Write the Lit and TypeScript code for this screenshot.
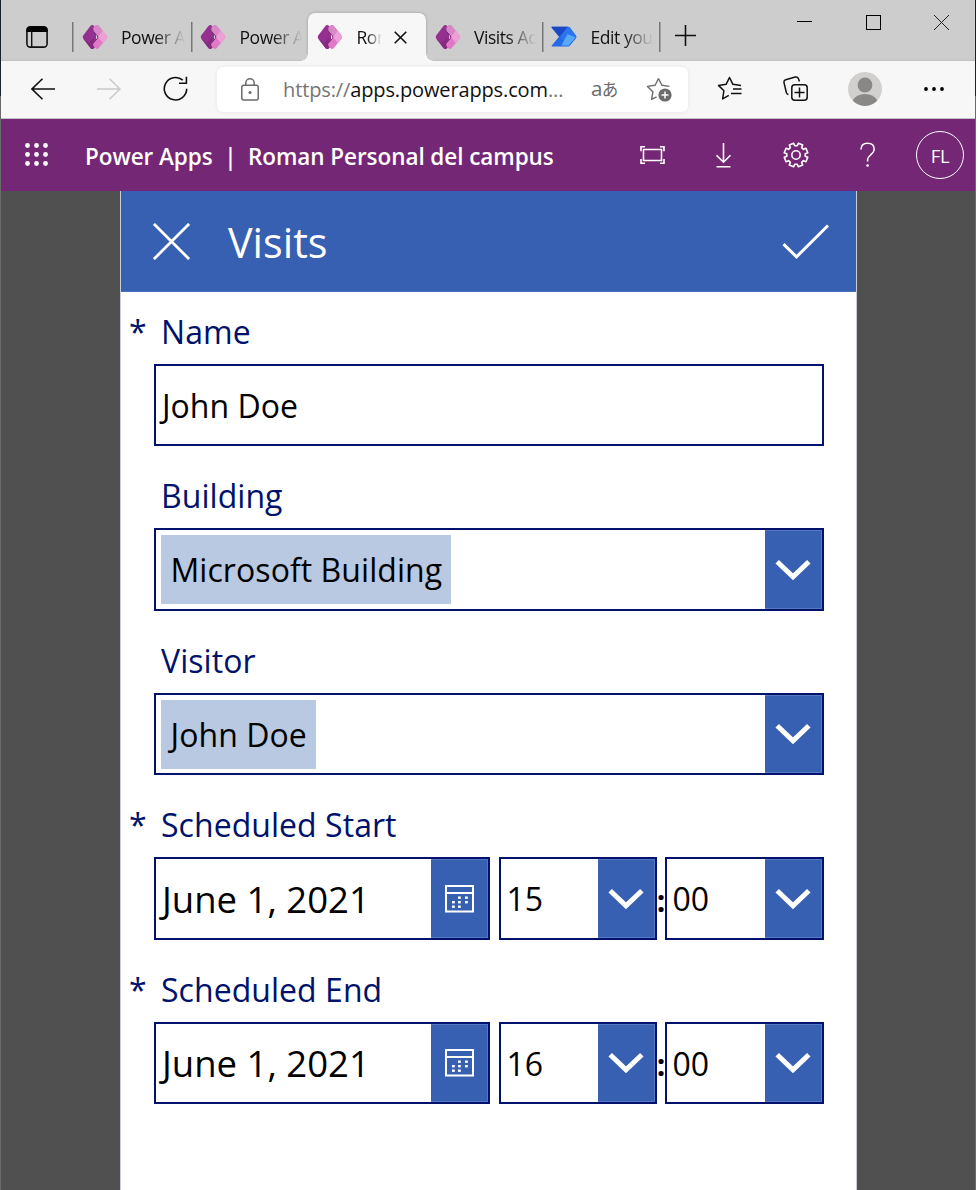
import { LitElement, html, svg, css, nothing } from "lit";
import { customElement, property } from "lit/decorators.js";

const powerAppsLogo = html`<svg width="26" height="26" viewBox="0 0 26 26">
  <path d="M8.600 1.700 Q10 .4 11.600 1.500 L14 4 V22 L11.600 24.500 Q10 25.600 8.600 24.300 L1.200 14.500 Q.2 13 1.200 11.500Z" fill="#94308f"/>
  <path d="M1.200 14.500 L8.600 24.300 Q10 25.600 11.600 24.500 L13 22 L12 13.500 L7 19Z" fill="#852a82"/>
  <path d="M13.400 1.700 Q15 .3 16.600 1.700 L24.700 11.500 Q25.700 13 24.700 14.500 L16.600 24.300 Q15 25.600 13.400 24.300 L11 21.600 Q10.200 20.400 11.200 19.200 L15.300 14.600 Q16.300 13.200 15.300 11.800 L11.400 7.200 Q10.200 5.800 11 4.200Z" fill="#e07ac6"/>
  <path d="M13.400 1.700 Q15 .3 16.600 1.700 L20.600 6.500 L15.800 12.300 L11.400 7.200 Q10.200 5.800 11 4.200Z" fill="#d888c4"/>
  <path d="M20.600 6.500 L24.700 11.500 Q25.700 13 24.700 14.500 L20.900 19 L16 13Z" fill="#eda0d6"/>
  <path d="M11 4.200 Q10.200 5.800 11.400 7.200 L15.300 11.800 Q16.300 13.200 15.300 14.600 L11.200 19.200 Q10.200 20.400 11 21.600" fill="none" stroke="#76206f" stroke-width=".9"/>
</svg>`;

const automateLogo = html`<svg width="26" height="22" viewBox="0 0 26 22">
  <path d="M.5 1.6 Q.3 .8 1.2 .8 H17 Q18.2 .8 19 1.8 L25 9.6 Q25.8 11 25 12.2 L19 19.6 Q18.2 20.6 17 20.6 H1.2 Q.2 20.6 .8 19.6 L8 10.8Z" fill="#2469e8"/>
  <path d="M.5 1.6 Q.3 .8 1.2 .8 H17 L8.4 10.8Z" fill="#1b49c4"/>
  <path d="M17 .8 Q18.2 .8 19 1.8 L25.4 10.8 L17.4 20.6 L9 10.8Z" fill="#2a76ee"/>
  <path d="M16.6 8 L24.4 11.400 L17.6 19.400 L10.4 19.400Z" fill="#5aa8fb"/>
</svg>`;

const chevron = html`<svg width="36" height="22" viewBox="0 0 36 22"><path d="M2.200 2.800 L18 17.800 L33.800 2.800" fill="none" stroke="#fff" stroke-width="5"/></svg>`;

const calendar = html`<svg width="30" height="28" viewBox="0 0 30 28">
  <path d="M2 1 H29 V26.500 H2Z M2 8 H29" fill="none" stroke="#fff" stroke-width="2"/>
  ${[[14, 11.5], [21, 11.5], [8, 16], [14, 16], [21, 16], [8, 20.5], [14, 20.5]].map(
    ([x, y]) => svg`<rect x=${x} y=${y} width="2.8" height="2.4" fill="#fff"/>`,
  )}
</svg>`;

const gearPath = (() => {
  const pts: string[] = [];
  const c = 13;
  for (let i = 0; i < 8; i++) {
    const a = ((i + 0.5) * Math.PI) / 4;
    for (const [da, r] of [[-0.26, 9.3], [-0.2, 12], [0.2, 12], [0.26, 9.3]]) {
      pts.push(`${(c + r * Math.cos(a + da)).toFixed(2)} ${(c + r * Math.sin(a + da)).toFixed(2)}`);
    }
  }
  return `M${pts.join("L")}Z`;
})();

const starPath = "M12.5 1.5 L15.9 8.3 L23.4 9.4 M12.5 1.5 L9.1 8.3 L1.5 9.4 L6.9 14.8 L5.6 22.4 L10.6 19.8";

@customElement("browser-tab")
class BrowserTab extends LitElement {
  @property() label = "";
  @property() kind = "apps";
  @property({ type: Boolean }) active = false;
  static styles = css`
    :host { display: block; height: 48px; box-sizing: border-box; }
    .tab { display: flex; align-items: center; height: 48px; padding-left: 9.5px; position: relative; }
    .icon { display: flex; width: 26px; justify-content: center; }
    .label {
      margin-left: 13.5px; flex: 1; min-width: 0; white-space: nowrap;
      font: 17.5px/26px "Open Sans", sans-serif; letter-spacing: -0.45px; color: #111;
      -webkit-mask-image: linear-gradient(90deg, #000 calc(100% - 30px), transparent);
      mask-image: linear-gradient(90deg, #000 calc(100% - 30px), transparent);
      margin-right: 6px;
    }
    .on { background: #f7f7f7; border-radius: 7px 7px 0 0; box-shadow: 0 0 3px rgba(0, 0, 0, 0.25); clip-path: inset(-4px -8px 0 -8px); }
    .on::before, .on::after {
      content: ""; position: absolute; bottom: 0; width: 7px; height: 7px;
    }
    .on::before { left: -7px; background: radial-gradient(circle at 0 0, #cdcdcd 6.5px, #f7f7f7 7px); }
    .on::after { right: -7px; background: radial-gradient(circle at 100% 0, #cdcdcd 6.5px, #f7f7f7 7px); }
    .on .label { mask-image: linear-gradient(90deg, #000 10px, transparent 25px); margin-right: 10px; }
    .close { display: flex; margin-right: 19px; }
  `;
  render() {
    return html`<div class=${this.active ? "tab on" : "tab"}>
      <span class="icon">${this.kind === "apps" ? powerAppsLogo : automateLogo}</span>
      <span class="label">${this.label}</span>
      ${this.active
        ? html`<span class="close"><svg width="13" height="13" viewBox="0 0 13 13"><path d="M.7 .7 L12.3 12.3 M12.3 .7 L.7 12.3" stroke="#111" stroke-width="1.6"/></svg></span>`
        : nothing}
    </div>`;
  }
}

@customElement("form-field")
class FormField extends LitElement {
  @property() label = "";
  @property({ type: Boolean }) required = false;
  static styles = css`
    :host { display: block; margin-bottom: 27px; }
    .label { display: flex; height: 44px; margin-bottom: 11px; font: 32px/46px "Open Sans", sans-serif; letter-spacing: 0.05px; color: #00126b; white-space: nowrap; }
    .star { width: 32px; margin-left: -1px; }
    .row { display: flex; margin-left: 24px; }
  `;
  render() {
    return html`<div class="label"><span class="star">${this.required ? "*" : ""}</span><span>${this.label}</span></div>
      <div class="row"><slot></slot></div>`;
  }
}

@customElement("input-box")
class InputBox extends LitElement {
  @property() value = "";
  @property() kind = "text";
  @property() action = "";
  static styles = css`
    :host { display: block; }
    .box {
      display: flex; align-items: center; height: 82.5px; box-sizing: border-box; background: #fff;
      border: 2px solid #00126b; font: 32px/44px "Open Sans", sans-serif; color: #000; white-space: nowrap;
    }
    .value { flex: 1; padding-left: 6px; padding-top: 2px; }
    .kind-date .value { font-size: 36.5px; padding-left: 6px; padding-top: 0; }
    .kind-time .value { padding-left: 5.5px; padding-top: 1px; }
    .pick { flex: 1; padding-left: 5px; display: flex; }
    .chip { background: #b9c9e2; height: 69px; padding: 1px 9px 0 9.5px; letter-spacing: 0.06px; display: flex; align-items: center; box-sizing: border-box; }
    .button { width: 57.5px; align-self: stretch; background: #3860b2; display: flex; align-items: center; justify-content: center; box-shadow: inset -1px -1px 0 #5577c4, inset 0 1px 0 #5577c4; }
  `;
  render() {
    return html`<div class="box kind-${this.kind}">
      ${this.kind === "tag"
        ? html`<span class="pick"><span class="chip">${this.value}</span></span>`
        : html`<span class="value">${this.value}</span>`}
      ${this.action ? html`<span class="button">${this.action === "calendar" ? calendar : chevron}</span>` : nothing}
    </div>`;
  }
}

@customElement("app-root")
class AppRoot extends LitElement {
  static styles = css`
    :host { display: block; width: 978px; height: 1190px; overflow: hidden; background: #fff; font-family: "Open Sans", sans-serif; }
    svg { display: block; }
    .window { display: grid; grid-template-columns: 1px 974px 1px; width: 976px; height: 1190px; }
    .edge { background: linear-gradient(#1a2230 96px, #6b6b6b 96px); }
    .main { display: flex; flex-direction: column; height: 1190px; background: #505050; overflow: hidden; }

    .tabs { display: flex; align-items: flex-start; height: 61px; box-sizing: border-box; background: linear-gradient(#cdcdcd 59px, #bfbfbf 61px); }
    .strip { display: grid; grid-template-columns: 71px 118.500px 117px 118.500px 115.500px 117.500px 52px; height: 61px; padding-top: 13px; box-sizing: border-box; }
    .tabmenu { display: flex; align-items: center; padding-left: 25px; height: 48px; }
    .sep { background: linear-gradient(#777, #777) 0 9px / 1.5px 30px no-repeat; }
    .after { margin-left: -1px; }
    .newtab { display: flex; height: 45px; align-items: center; justify-content: center; background: linear-gradient(#777, #777) 0 9px / 1.5px 30px no-repeat; }
    .controls { display: flex; margin-left: auto; height: 45px; align-items: center; margin-right: -1px; }
    .controls span { width: 68.500px; display: flex; justify-content: center; }

    .toolbar { display: grid; grid-template-columns: 66px 66px 66px 471px 66px 66px 72px 66px; column-gap: 0; align-items: center; height: 58px; box-sizing: border-box; background: #f7f7f7; border-bottom: 1px solid #c4c4c4; padding-left: 9px; }
    .cell { display: flex; align-items: center; justify-content: center; padding-bottom: 2px; }
    .address { margin-left: 9px; margin-right: -9px; height: 45px; box-sizing: border-box; display: flex; align-items: center; background: #fff; border-radius: 6px; box-shadow: 0 0 4px rgba(0, 0, 0, 0.08); padding-left: 24px; }
    .nudge { margin-left: 17.500px; margin-right: -17.500px; }
    .url { margin-left: 24px; width: 308px; white-space: nowrap; font-size: 20px; line-height: 28px; letter-spacing: -0.13px; color: #757575; }
    .url b { font-weight: 400; color: #111; }
    .lang { display: flex; align-items: baseline; width: 55px; padding-bottom: 2px; white-space: nowrap; font: 20.5px/28px "Open Sans", "Noto Sans CJK JP", sans-serif; color: #6b6b6b; letter-spacing: -0.7px; }
    .lang small { font-size: 16.5px; }

    .suite { display: flex; align-items: center; height: 72px; background: #742774; color: #fff; }
    .waffle { width: 84px; padding-left: 24px; box-sizing: border-box; }
    .brand { flex: 1; white-space: pre; font-size: 22.5px; font-weight: 600; line-height: 32px; letter-spacing: -0.07px; padding-top: 3px; }
    .tool { width: 72px; display: flex; justify-content: center; margin-right: -1px; margin-left: 1px; }
    .user { width: 46px; height: 46px; border: 1px solid #fff; border-radius: 50%; display: flex; align-items: center; justify-content: center; font-size: 18.500px; letter-spacing: -0.3px; }

    .canvas { margin-left: 119px; width: 735px; height: 999px; background: #fff; border: 1px solid #c9cdd6; border-width: 0 1px; }
    .head { display: flex; align-items: center; height: 101px; box-sizing: border-box; background: #3860b2; border-bottom: 1px solid #4a6fbd; color: #fff; padding: 0 27px 0 31.500px; }
    .title { flex: 1; margin-left: 38.500px; font-size: 41.300px; line-height: 54px; padding-top: 2px; }
    .accept { margin-top: 1px; }
    .form { padding: 16.800px 0 0 9px; }
    .wide { width: 670px; }
    .day { width: 336px; }
    .hour { width: 158px; margin-left: 9px; }
    .minute { width: 159px; }
    .colon { width: 8px; display: flex; align-items: center; justify-content: center; font: 700 30px/40px "Open Sans", sans-serif; padding-top: 4px; }
  `;

  private schedule(label: string, hour: string) {
    return html`<form-field label=${label} required>
      <input-box class="day" kind="date" action="calendar" value="June 1, 2021"></input-box>
      <input-box class="hour" kind="time" action="open" value=${hour}></input-box>
      <span class="colon">:</span>
      <input-box class="minute" kind="time" action="open" value="00"></input-box>
    </form-field>`;
  }

  render() {
    return html`<div class="window">
      <div class="edge"></div>
      <div class="main">
        <div class="tabs">
          <div class="strip">
            <div class="tabmenu">
              <svg width="22" height="22" viewBox="0 0 22 22"><rect x=".9" y=".9" width="20.2" height="20.2" rx="3.4" fill="none" stroke="#111" stroke-width="1.6"/><path d="M.5 6 V4 Q.5 .5 4 .5 H18 Q21.500 .5 21.500 4 V6Z" fill="#000"/><path d="M5.700 6 V21" stroke="#111" stroke-width="1.400"/></svg>
            </div>
            <browser-tab class="sep" label="Power A"></browser-tab>
            <browser-tab class="sep" label="Power A"></browser-tab>
            <browser-tab active label="Ron"></browser-tab>
            <browser-tab class="after" label="Visits Ac"></browser-tab>
            <browser-tab class="sep" kind="flow" label="Edit you"></browser-tab>
            <div class="newtab"><svg width="21" height="21" viewBox="0 0 21 21"><path d="M10.500 0 V21 M0 10.500 H21" stroke="#111" stroke-width="1.600"/></svg></div>
          </div>
          <div class="controls">
            <span><svg width="15" height="15" viewBox="0 0 15 15"><path d="M0 6.500 H15" stroke="#000"/></svg></span>
            <span><svg width="15" height="15" viewBox="0 0 15 15"><rect x=".5" y=".5" width="14" height="14" fill="none" stroke="#000"/></svg></span>
            <span><svg width="15" height="15" viewBox="0 0 15 15"><path d="M0 0 L15 15 M15 0 L0 15" stroke="#222"/></svg></span>
          </div>
        </div>

        <div class="toolbar">
          <span class="cell"><svg width="24" height="22" viewBox="0 0 24 22"><path d="M11.500 .7 L1 11 L11.500 21.300 M1 11 H24" fill="none" stroke="#111" stroke-width="1.600"/></svg></span>
          <span class="cell"><svg width="24" height="22" viewBox="0 0 24 22"><path d="M12.500 .7 L23 11 L12.500 21.300 M23 11 H0" fill="none" stroke="#c9c9c9" stroke-width="1.500"/></svg></span>
          <span class="cell"><svg width="25" height="25" viewBox="0 0 25 25"><path d="M19.800 4.200 A11.200 11.200 0 1 0 23.700 12.800 M23.400 .8 V7.300 H16" fill="none" stroke="#111" stroke-width="1.600"/></svg></span>
          <div class="address">
            <svg width="18" height="23" viewBox="0 0 18 23"><rect x=".8" y="7.300" width="16.400" height="14.600" rx="2" fill="none" stroke="#6b6b6b" stroke-width="1.500"/><path d="M4.800 7 V5 A4.200 4.200 0 0 1 13.200 5 V7" fill="none" stroke="#6b6b6b" stroke-width="1.500"/><circle cx="9" cy="14.400" r="1.500" fill="#6b6b6b"/></svg>
            <span class="url">https://<b>apps.powerapps.com</b>...</span>
            <span class="lang">a<small>あ</small></span>
            <svg width="27" height="25" viewBox="0 0 27 25"><path d=${starPath} fill="none" stroke="#6b6b6b" stroke-width="1.400" stroke-linejoin="round"/><circle cx="19" cy="18" r="6.600" fill="#6b6b6b"/><path d="M15.500 18 H22.500 M19 14.500 V21.500" stroke="#fff" stroke-width="1.500"/></svg>
          </div>
          <span class="cell nudge"><svg width="25" height="25" viewBox="0 0 25 25"><path d="M24 9.500 L15.900 8.300 L12.500 1.500 L9.100 8.300 L1.500 9.400 L6.900 14.800 L5.600 22.900 L11.800 19.400" fill="none" stroke="#111" stroke-width="1.500" stroke-linejoin="round"/><path d="M16 12.900 H24.500 M14 17.600 H24.500" stroke="#111" stroke-width="1.500"/></svg></span>
          <span class="cell nudge"><svg width="25" height="25" viewBox="0 0 25 25"><rect x="8.800" y="8.800" width="15.400" height="15.400" rx="3" fill="none" stroke="#111" stroke-width="1.500"/><path d="M16.500 11.500 V21.500 M11.500 16.500 H21.500" stroke="#111" stroke-width="1.500"/><path d="M5.500 18.600 Q3.900 18.300 3.400 16.700 L1 6.600 Q.6 4.500 2.700 3.800 L12.300 1 Q14.500 .5 15.400 2.600 L16.400 5.400" fill="none" stroke="#111" stroke-width="1.500"/></svg></span>
          <span class="cell nudge"><svg width="34" height="34" viewBox="0 0 34 34"><circle cx="17" cy="17" r="17" fill="#d2d0ce"/><circle cx="17" cy="13" r="7.400" fill="#8a8886"/><path d="M4.800 28.600 Q8 22 17 22 T29.200 28.600 Q24 34 17 34 T4.800 28.600Z" fill="#8a8886"/></svg></span>
          <span class="cell nudge"><svg width="20" height="4" viewBox="0 0 20 4"><circle cx="2" cy="2" r="1.900"/><circle cx="10" cy="2" r="1.900"/><circle cx="18" cy="2" r="1.900"/></svg></span>
        </div>

        <div class="suite">
          <span class="waffle"><svg width="24" height="24" viewBox="0 0 24 24">${[2.5, 11.5, 20.5].map((y) => [2.5, 11.5, 20.5].map((x) => svg`<circle cx=${x} cy=${y} r="2.4" fill="#fff"/>`))}</svg></span>
          <span class="brand">Power Apps  |  Roman Personal del campus</span>
          <span class="tool"><svg width="25" height="19" viewBox="0 0 25 19"><path d="M3.500 3.500 H21.500 V14.500 H3.500Z M5 .8 H1 V5.200 M20 .8 H24 V5.200 M5 17.300 H1 V13 M20 17.300 H24 V13" fill="none" stroke="#fff" stroke-width="1.600"/></svg></span>
          <span class="tool"><svg width="16" height="25" viewBox="0 0 16 25"><path d="M7.500 0 V19 M.5 12.300 L7.500 19.200 L14.500 12.300 M.5 23.700 H14.500" fill="none" stroke="#fff" stroke-width="1.600"/></svg></span>
          <span class="tool"><svg width="26" height="26" viewBox="0 0 26 26"><path d=${gearPath} fill="none" stroke="#fff" stroke-width="1.600" stroke-linejoin="round"/><circle cx="13" cy="13" r="4.200" fill="none" stroke="#fff" stroke-width="1.600"/></svg></span>
          <span class="tool"><svg width="16" height="26" viewBox="0 0 16 26"><path d="M1 7.500 Q1 1.200 7.600 1.200 T14.200 7.200 Q14.200 10 11 12.500 Q7.600 15.300 7.600 18 V19.500" fill="none" stroke="#fff" stroke-width="1.600"/><circle cx="7.600" cy="23.500" r="1.300" fill="#fff"/></svg></span>
          <span class="tool"><span class="user">FL</span></span>
        </div>

        <div class="canvas">
          <div class="head">
            <svg width="37" height="37" viewBox="0 0 37 37"><path d="M.9 .9 L36.100 36.100 M36.100 .9 L.9 36.100" stroke="#fff" stroke-width="2.800"/></svg>
            <span class="title">Visits</span>
            <svg class="accept" width="47" height="35" viewBox="0 0 47 35"><path d="M1.500 20.200 L14.500 32.800 L46 1.500" fill="none" stroke="#fff" stroke-width="3"/></svg>
          </div>
          <div class="form">
            <form-field label="Name" required><input-box class="wide" value="John Doe"></input-box></form-field>
            <form-field label="Building"><input-box class="wide" kind="tag" action="open" value="Microsoft Building"></input-box></form-field>
            <form-field label="Visitor"><input-box class="wide" kind="tag" action="open" value="John Doe"></input-box></form-field>
            ${this.schedule("Scheduled Start", "15")}
            ${this.schedule("Scheduled End", "16")}
          </div>
        </div>
      </div>
      <div class="edge"></div>
    </div>`;
  }
}
